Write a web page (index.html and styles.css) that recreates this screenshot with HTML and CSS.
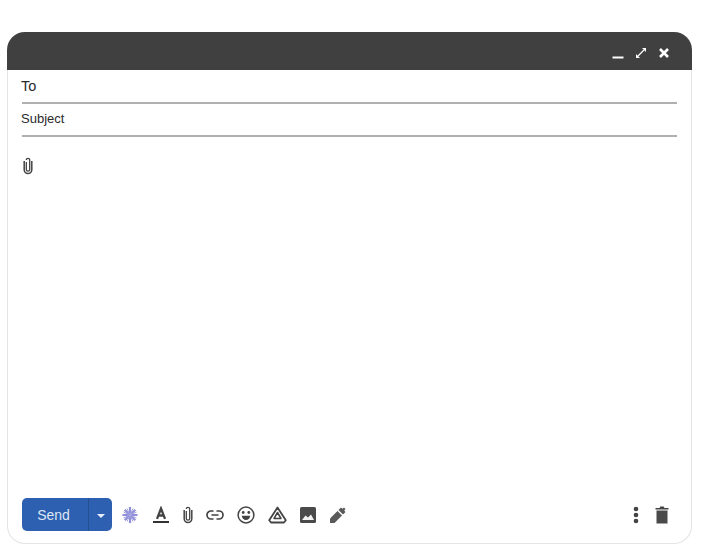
FILE: index.html
```html
<!DOCTYPE html>
<html lang="en">
<head>
  <meta charset="UTF-8" />
  <title>New message</title>
  <link rel="stylesheet" href="styles.css">
</head>
<body>

<div class="compose">
  <div class="titlebar">
    <svg class="win-icon" width="12" height="12" viewBox="0 0 12 12"><path d="M0.500 10.500h11" stroke="#fff" stroke-width="2"/></svg>
    <svg class="win-icon" width="12" height="12" viewBox="0 0 12 12"><path d="M3 9 9 3" stroke="#fff" stroke-width="1.300"/><path d="M7 1h4v4zM1 7v4h4z" fill="#fff"/></svg>
    <svg class="win-icon" width="12" height="12" viewBox="0 0 12 12"><path d="M2 2l8 8M10 2l-8 8" stroke="#fff" stroke-width="2.600"/></svg>
  </div>

  <div class="field field-to"><span>To</span></div>
  <div class="field field-subject"><span>Subject</span></div>

  <div class="message">
    <svg width="10" height="19" viewBox="0 0 10 19"><path d="M3.300 6v7.500a1.700 1.700 0 0 0 3.400 0V4a1.700 1.700 0 0 0-3.400 0" fill="none" stroke="#444" stroke-width="1.300"/><path d="M1.200 5v8.800a3.800 3.800 0 0 0 7.600 0V5" fill="none" stroke="#444" stroke-width="1.500"/></svg>
  </div>

  <div class="toolbar">
    <div class="send-btn">
      <span class="send-label">Send</span>
      <span class="send-more"><span class="caret"></span></span>
    </div>

    <div class="tools">
      <svg class="tool" width="18" height="18" viewBox="0 0 18 18"><path d="M9 1v16M1.500 9h15M3.700 3.700l10.600 10.600M14.300 3.700 3.700 14.300" stroke="#9090d8" stroke-width="2.200"/><path d="M6 2.500l6 13M12 2.500l-6 13M2.500 6l13 6M15.500 6l-13 6" stroke="#a5a5e2" stroke-width="1"/></svg>
      <svg class="tool" width="18" height="18" viewBox="0 0 18 18"><path d="M5 12.800 9 2.500l4 10.300M6.200 9.500h5.600" fill="none" stroke="#444" stroke-width="2.300"/><path d="M1 16h16" stroke="#333" stroke-width="2"/></svg>
      <svg class="tool" width="10" height="19" viewBox="0 0 10 19"><path d="M3.300 6v7.500a1.700 1.700 0 0 0 3.400 0V4a1.700 1.700 0 0 0-3.400 0" fill="none" stroke="#444" stroke-width="1.300"/><path d="M1.200 5v8.800a3.800 3.800 0 0 0 7.600 0V5" fill="none" stroke="#444" stroke-width="1.500"/></svg>
      <svg class="tool" width="18" height="12" viewBox="0 0 18 12"><path d="M7.500 2H5a4 4 0 0 0 0 8h2.500M10.500 2H13a4 4 0 0 1 0 8h-2.500M5.500 6h7" fill="none" stroke="#444" stroke-width="1.700"/></svg>
      <svg class="tool" width="18" height="18" viewBox="0 0 18 18"><circle cx="9" cy="9" r="7.900" fill="none" stroke="#444" stroke-width="1.500"/><circle cx="6.200" cy="6.500" r="1.400" fill="#444"/><circle cx="11.800" cy="6.500" r="1.400" fill="#444"/><path d="M4.800 9.800h8.400a4.200 4.200 0 0 1-8.400 0z" fill="#444"/></svg>
      <svg class="tool" width="19" height="18" viewBox="0 0 19 18"><path d="M9.500 1.500 17.800 14.300 16 16.500H3L1.200 14.300z" fill="none" stroke="#444" stroke-width="1.800" stroke-linejoin="round"/><path d="M9.500 6.500 13 12.500H6z" fill="none" stroke="#444" stroke-width="1.500" stroke-linejoin="round"/></svg>
      <svg class="tool" width="16" height="16" viewBox="0 0 16 16"><rect width="16" height="16" rx="1.500" fill="#4a4a4a"/><path d="M2 13 5.500 8.500 8 10.500 11 7.500 14 13z" fill="#f2f2f2"/></svg>
      <svg class="tool" width="18" height="18" viewBox="0 0 18 18"><path d="M1 17v-4.500L8.500 5l4.500 4.500L5.500 17z" fill="#5a5a5a"/><path d="M9.500 4 12 1.500l1.500 1.300L15 1.500l1.500 1.500L15.200 4.500l1.300 1.500L14 8.500z" fill="#5a5a5a"/></svg>
    </div>

    <div class="tools-right">
      <svg width="6" height="18" viewBox="0 0 6 18"><circle cx="3" cy="3" r="2.300" fill="#444"/><circle cx="3" cy="9" r="2.300" fill="#444"/><circle cx="3" cy="15" r="2.300" fill="#444"/></svg>
      <svg width="14" height="18" viewBox="0 0 14 18"><path d="M0.500 2h4l.8-1.500h3.400L9.500 2h4v1.500H.5z" fill="#444"/><rect x="1.500" y="4.500" width="11" height="13" fill="#4a4a4a"/></svg>
    </div>
  </div>
</div>

</body>
</html>
```

FILE: styles.css
```css
body { margin: 0; padding: 32px 13px 13px 7px; font-family: "Liberation Sans", Arial, sans-serif; background: #fff; color: #2b2b2b; }

.compose {
  height: 512px; display: flex; flex-direction: column; box-sizing: border-box;
  border: 1px solid #e4e4e4; border-top: none; border-radius: 18px; background: #fff;
}

.titlebar {
  height: 38px; margin: 0 -1px; display: flex; align-items: center; justify-content: flex-end;
  gap: 11px; padding-right: 22px; background: #404040; border-radius: 18px 18px 0 0;
}
.win-icon { margin-top: 3px; }

.field {
  margin: 0 14px; padding-bottom: 2px; border-bottom: 2px solid #b0b0b0;
  display: flex; align-items: center;
}
.field span { margin-left: -1px; }
.field-to { height: 30px; font-size: 14.500px; padding-top: 1px; height: 29px; }
.field-subject { height: 29px; font-size: 13px; }

.message { flex: 1; padding: 19px 0 0 15px; }

.toolbar { display: flex; align-items: center; padding: 0 22px 12px 14px; }

.send-btn {
  width: 90px; height: 33px; display: flex; background: #2d60b0; color: #dfe7f5;
  border-radius: 5px; font-size: 14px;
}
.send-label { width: 67px; padding-right: 3px; box-sizing: border-box; display: flex; align-items: center; justify-content: center; border-right: 1px solid #24508f; }
.send-more { flex: 1; display: flex; align-items: center; justify-content: center; }
.caret { border-left: 4px solid transparent; border-right: 4px solid transparent; border-top: 4px solid #e8eefa; margin-top: 2px; }

.tools { display: flex; align-items: center; gap: 13px; margin-left: 9px; flex: 1; }
.tools-right { display: flex; align-items: center; gap: 16px; }
```
